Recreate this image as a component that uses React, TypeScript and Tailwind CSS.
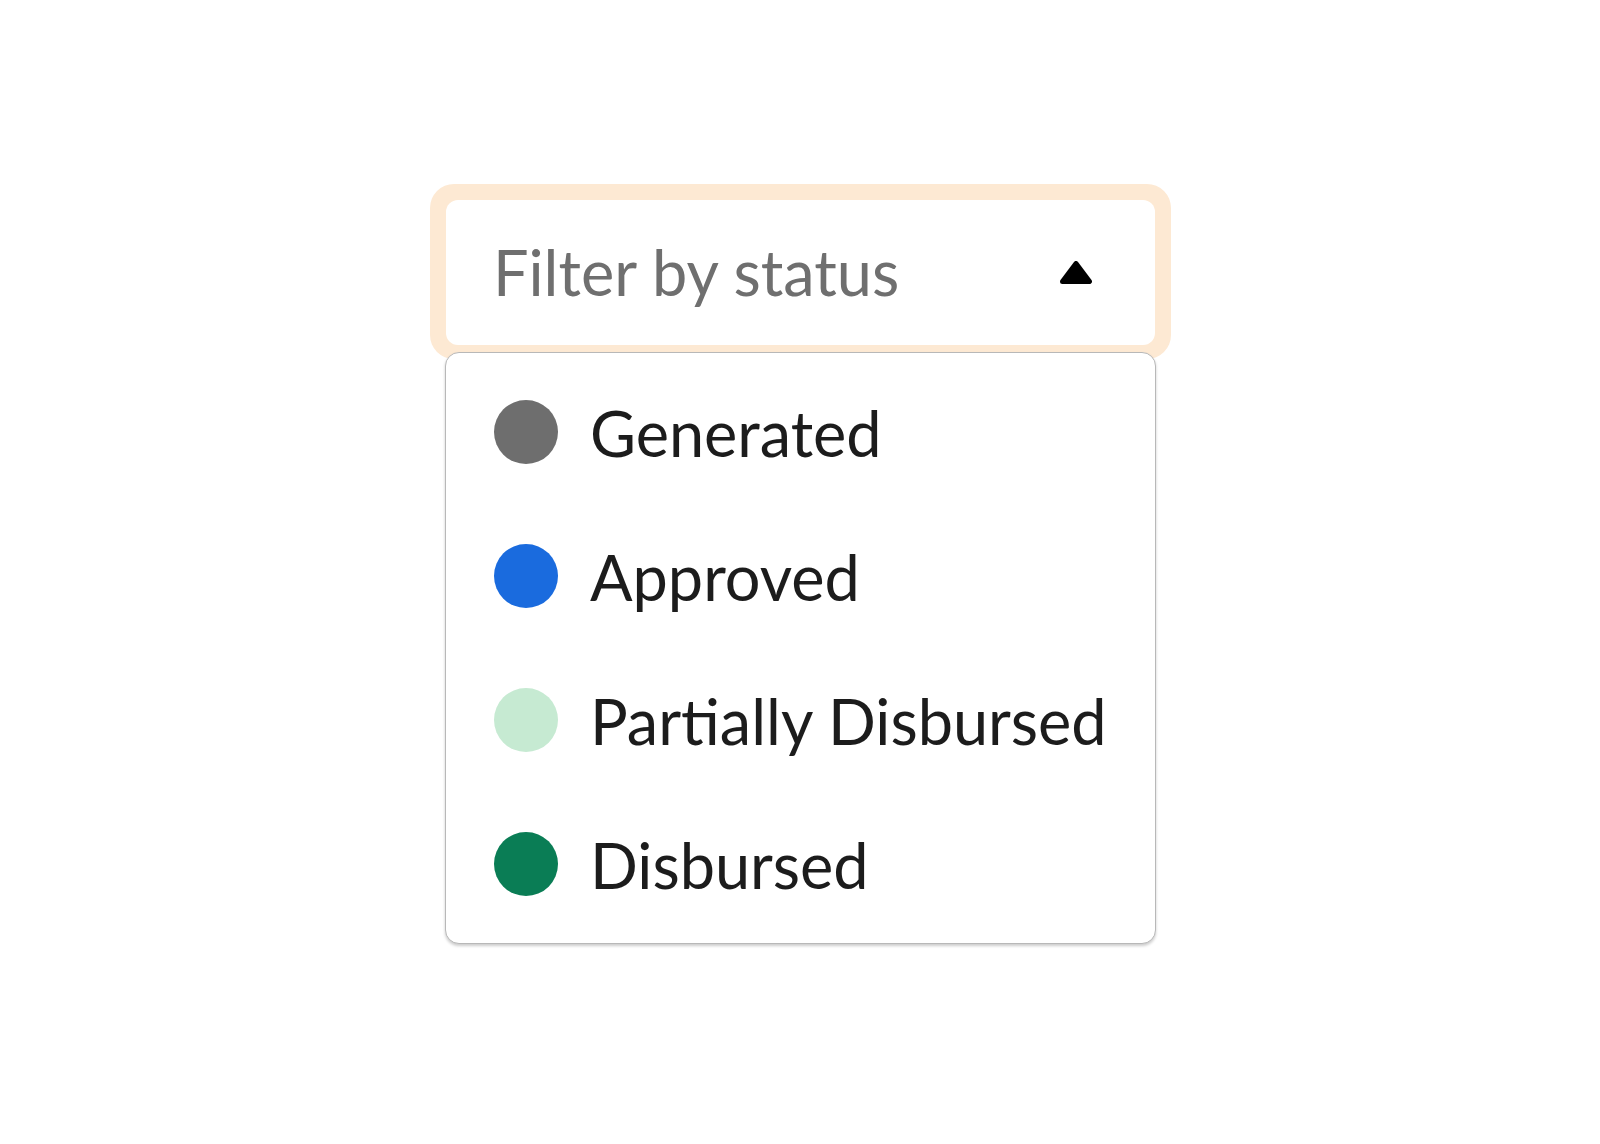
import React from "react";

const items = [
  { label: "Generated", color: "bg-[#6e6e6e]" },
  { label: "Approved", color: "bg-[#1a6bde]" },
  { label: "Partially Disbursed", color: "bg-[#c6ead2]" },
  { label: "Disbursed", color: "bg-[#0a7d55]" },
];

export default function App() {
  return (
    <div className="min-h-[1144px] w-full bg-white pt-[184px] pl-[430px] font-['Lato',sans-serif]">
      <div className="relative w-[741px]">
        <div className="rounded-[24px] bg-[#fde9d3] px-[16px] pt-[16px] pb-[14px]">
          <div className="flex h-[145px] items-center justify-between rounded-[12px] bg-white pl-[47px] pr-[63px]">
            <span className="mb-[2px] text-[63px] leading-none text-[#6f6f6f]">Filter by status</span>
            <svg width="32" height="23" viewBox="0 0 32 23" className="shrink-0">
              <polygon
                points="16,2.5 29.5,20.5 2.5,20.5"
                fill="#000"
                stroke="#000"
                strokeWidth="5"
                strokeLinejoin="round"
              />
            </svg>
          </div>
        </div>
        <div className="absolute left-[15px] top-[168px] w-[711px] rounded-[14px] border border-[#b8b8b8] bg-white py-[7px] shadow-[0_2px_3px_rgba(0,0,0,0.2)]">
          {items.map((it) => (
            <div key={it.label} className="flex h-[144px] items-center pl-[48px]">
              <span className={`h-[64px] w-[64px] shrink-0 rounded-full ${it.color}`} />
              <span className="ml-[32px] text-[63px] leading-none text-[#1c1c1c]">{it.label}</span>
            </div>
          ))}
        </div>
      </div>
    </div>
  );
}
